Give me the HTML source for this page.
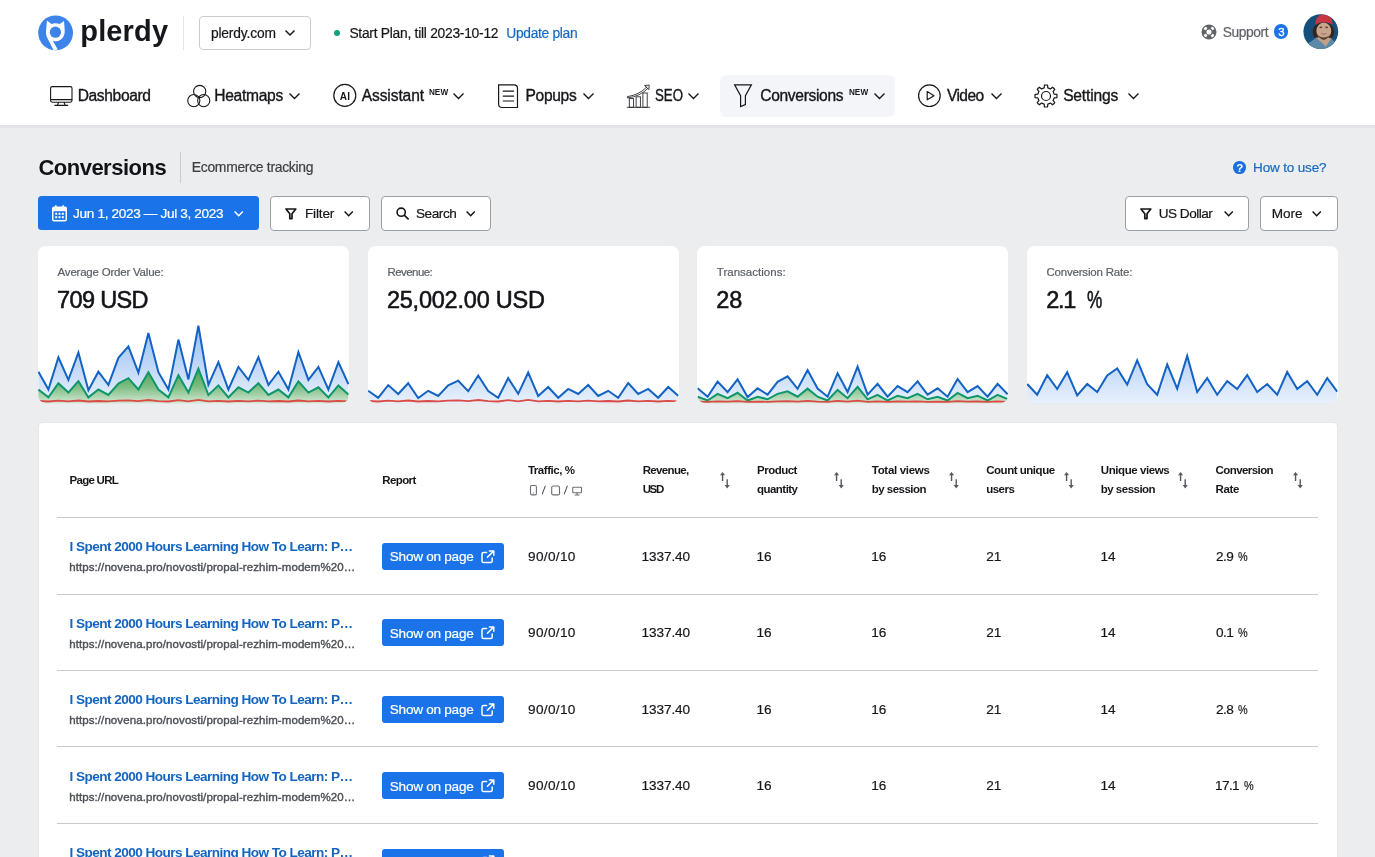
<!DOCTYPE html>
<html lang="en">
<head>
<meta charset="utf-8">
<title>Plerdy — Conversions</title>
<style>
*{box-sizing:border-box;margin:0;padding:0}
html,body{width:1375px;height:857px;overflow:hidden;background:#ebedef;font-family:"Liberation Sans",Arial,sans-serif;color:#111;}
#w{position:absolute;left:0;top:0;width:1375px;height:857px;overflow:hidden;will-change:transform}
.a{position:absolute;white-space:nowrap;line-height:1}
svg{position:absolute;overflow:visible}
#hdr{position:absolute;left:0;top:0;width:1375px;height:128px;background:#fff;border-bottom:3px solid #e2e4e7}
.btn{position:absolute;top:196px;height:34.6px;border:1px solid #9aa0a6;border-radius:4px;background:#fff}
.card{position:absolute;top:246px;width:311px;height:157.2px;background:#fff;border-radius:8px;overflow:hidden}
#tbl{position:absolute;left:38.8px;top:423px;width:1298px;height:460px;background:#fff;border-radius:4px;box-shadow:0 0 0 1px #e6e8ea}
.hl{position:absolute;left:57.3px;width:1261px;height:1.1px;background:#c8cacd}
.sb{position:absolute;left:381.9px;width:122.5px;height:27px;background:#1a73e8;border-radius:3px}
</style>
</head>
<body>
<div id="w">
<div id="hdr"></div>


<svg style="left:0;top:0" width="180" height="64" viewBox="0 0 180 64">
  <circle cx="55.6" cy="32.9" r="17.4" fill="#3d84ea"/>
  <path d="M46.9 20.6 L51.4 24 Q55.4 22.5 59.6 24 L64 20.9 L64.7 30 Q65.2 36.5 60.6 39.8 Q56.5 42.3 52.8 40.8 L57.8 49.6 L53.6 50.2 L46.6 36.5 Q45.4 33 46.2 29.5 Z" fill="#fff"/>
  <circle cx="55.4" cy="32.2" r="5.6" fill="#3d84ea"/>
</svg>
<div class="a" style="left:80.30px;top:17px;font-size:29px;font-weight:700;letter-spacing:0.140px;color:#15171c;">plerdy</div><div class="a" style="left:183px;top:16px;width:1.3px;height:34px;background:#e3e5e8"></div>
<div class="a" style="left:199px;top:16px;width:112px;height:34px;border:1px solid #c9ccd0;border-radius:4px;background:#fff"></div>
<div class="a" style="left:210.90px;top:27px;font-size:13.8px;letter-spacing:-0.162px;color:#15171a;-webkit-text-stroke:0.2px #15171a;">plerdy.com</div><svg style="left:285px;top:30.2px" width="10" height="6" viewBox="0 0 10 6"><path d="M0.5 0.5 L5 5 L9.5 0.5" fill="none" stroke="#15171a" stroke-width="1.5"/></svg>
<div class="a" style="left:334.3px;top:30.1px;width:6px;height:6px;border-radius:50%;background:#12a37a"></div>
<div class="a" style="left:349.40px;top:27px;font-size:13.8px;letter-spacing:-0.254px;color:#15171a;-webkit-text-stroke:0.2px #15171a;">Start Plan, till 2023-10-12</div><div class="a" style="left:506.30px;top:27px;font-size:13.8px;letter-spacing:-0.313px;color:#1769c2;-webkit-text-stroke:0.2px #1769c2;">Update plan</div>
<svg style="left:1200.7px;top:23.7px" width="16" height="16" viewBox="0 0 16 16">
  <circle cx="8" cy="8" r="6.9" fill="none" stroke="#5f6368" stroke-width="1.2"/>
  <circle cx="8" cy="8" r="3.1" fill="none" stroke="#5f6368" stroke-width="1.1"/>
  <path fill="#5f6368" d="M6.55 5.15 L4.82 1.76 A7.0 7.0 0 0 1 11.18 1.76 L9.45 5.15 A3.2 3.2 0 0 0 6.55 5.15 Z M10.85 6.55 L14.24 4.82 A7.0 7.0 0 0 1 14.24 11.18 L10.85 9.45 A3.2 3.2 0 0 0 10.85 6.55 Z M9.45 10.85 L11.18 14.24 A7.0 7.0 0 0 1 4.82 14.24 L6.55 10.85 A3.2 3.2 0 0 0 9.45 10.85 Z M5.15 9.45 L1.76 11.18 A7.0 7.0 0 0 1 1.76 4.82 L5.15 6.55 A3.2 3.2 0 0 0 5.15 9.45 Z"/>
</svg>
<div class="a" style="left:1222.80px;top:26px;font-size:13.8px;letter-spacing:-0.415px;color:#5f6368;-webkit-text-stroke:0.2px #5f6368;">Support</div><div class="a" style="left:1273.8px;top:24.2px;width:14.6px;height:14.6px;border-radius:50%;background:#1a73e8"></div>
<div class="a" style="left:1278.25px;top:27px;font-size:11.5px;color:#fff;-webkit-text-stroke:0.3px #fff;">3</div>
<svg style="left:1303px;top:14px" width="36" height="36" viewBox="0 0 36 36">
  <defs><clipPath id="avc"><circle cx="17.8" cy="17.6" r="17.4"/></clipPath><filter id="avb" x="-10%" y="-10%" width="120%" height="120%"><feGaussianBlur stdDeviation="0.55"/></filter></defs>
  <g clip-path="url(#avc)">
    <rect x="0" y="0" width="36" height="36" fill="#164f7c"/>
    <g filter="url(#avb)">
    <ellipse cx="20.4" cy="18" rx="10.8" ry="9.8" fill="#33251f"/>
    <path d="M2 37 L5 29.5 L13 23.8 L28 24 L33.5 30 L35 37 Z" fill="#5d89a8"/>
    <path d="M13 23.4 L23 32.5 L28.2 24 Z" fill="#c39f87"/>
    <ellipse cx="20.8" cy="17" rx="7.4" ry="8.6" fill="#caa58d"/>
    <path d="M13.6 18 Q15 24.8 20.8 26 Q26.2 24.8 28 18 Q27 23 20.8 23.6 Q14.6 23 13.6 18Z" fill="#5a4032"/>
    <ellipse cx="17.9" cy="13.4" rx="1.5" ry="0.8" fill="#5b4236"/><ellipse cx="23.6" cy="13.4" rx="1.5" ry="0.8" fill="#5b4236"/>
    <path d="M18.4 19.6 Q20.8 21.6 23.4 19.6 Q20.8 20.6 18.4 19.6Z" fill="#f2e6df" stroke="#8a5a4a" stroke-width="0.5"/>
    <path d="M12.4 10.6 Q12.3 1.5 20 0.4 Q28.8 0 29.8 10.4 Q21 5.8 12.4 10.6 Z" fill="#c9343f"/>
    </g>
  </g>
</svg>


<svg style="left:49px;top:84px" width="26" height="24" viewBox="49 84 26 24" fill="none" stroke="#15171a" stroke-width="1.1">
  <rect x="50.6" y="86.6" width="21.4" height="15.6" rx="1.6"/>
  <path d="M50.6 99.6 H72 M58.6 102.2 L57.4 105.3 M64 102.2 L65.2 105.3 M54.4 105.4 H68.2"/>
</svg>
<div class="a" style="left:77.67px;top:88px;font-size:15.6px;letter-spacing:-0.370px;color:#15171a;-webkit-text-stroke:0.35px #15171a;">Dashboard</div>
<svg style="left:186px;top:84px" width="26" height="24" viewBox="186 84 26 24" fill="none" stroke="#15171a" stroke-width="1.1">
  <circle cx="199.7" cy="91.5" r="6.1"/><circle cx="193.8" cy="100.6" r="6.1"/><circle cx="203.7" cy="100.6" r="6.1"/>
</svg>
<div class="a" style="left:214.18px;top:88px;font-size:15.6px;letter-spacing:-0.289px;color:#15171a;-webkit-text-stroke:0.35px #15171a;">Heatmaps</div><svg style="left:289px;top:92.7px" width="11" height="7" viewBox="0 0 11 7"><path d="M0.5 0.6 L5.5 5.6 L10.5 0.6" fill="none" stroke="#15171a" stroke-width="1.4"/></svg>

<svg style="left:332px;top:83px" width="26" height="26" viewBox="332 83 26 26" fill="none" stroke="#15171a" stroke-width="1.2">
  <circle cx="344.8" cy="95.4" r="11"/>
</svg>
<div class="a" style="left:339.80px;top:92px;font-size:10px;font-weight:700;letter-spacing:0.278px;color:#15171a;">AI</div><div class="a" style="left:361.68px;top:88px;font-size:15.6px;letter-spacing:-0.110px;color:#15171a;-webkit-text-stroke:0.35px #15171a;">Assistant</div><div class="a" style="left:428.90px;top:89px;font-size:8.2px;font-weight:700;letter-spacing:0.063px;color:#15171a;">NEW</div><svg style="left:453.3px;top:92.7px" width="11" height="7" viewBox="0 0 11 7"><path d="M0.5 0.6 L5.5 5.6 L10.5 0.6" fill="none" stroke="#15171a" stroke-width="1.4"/></svg>

<svg style="left:497px;top:83px" width="24" height="27" viewBox="497 83 24 27" fill="none" stroke="#15171a" stroke-width="1.2">
  <path d="M498.6 84.9 H514 Q517.5 84.9 517.5 88.4 V107.5 H502.1 Q498.6 107.5 498.6 104 Z"/>
  <path d="M502.8 91.2 H514 M502.8 96.1 H514 M502.8 101 H514"/>
</svg>
<div class="a" style="left:525.57px;top:88px;font-size:15.6px;letter-spacing:-0.348px;color:#15171a;-webkit-text-stroke:0.35px #15171a;">Popups</div><svg style="left:582.6px;top:92.7px" width="11" height="7" viewBox="0 0 11 7"><path d="M0.5 0.6 L5.5 5.6 L10.5 0.6" fill="none" stroke="#15171a" stroke-width="1.4"/></svg>

<svg style="left:626px;top:83px" width="26" height="26" viewBox="626 83 26 26" fill="none" stroke="#2a2d31" stroke-width="0.9">
  <path d="M626.8 107.3 H650.2"/>
  <rect x="629.3" y="98.6" width="4.3" height="8.7"/><rect x="636.1" y="96.8" width="4.3" height="10.5"/><rect x="642.9" y="93" width="4.3" height="14.3"/>
  <path d="M627.6 96.6 Q639 95 647.2 86.6 M627.6 97.9 Q640 96.6 648.2 88 M627.6 96.4 V98.1"/>
  <path d="M644.6 85.6 L649.2 85 L648.9 89.6 Z"/>
</svg>
<div class="a" style="left:654.97px;top:88px;font-size:15.6px;color:#15171a;-webkit-text-stroke:0.35px #15171a;transform-origin:0 0;transform:scaleX(0.85);">SEO</div><svg style="left:687.8px;top:92.7px" width="11" height="7" viewBox="0 0 11 7"><path d="M0.5 0.6 L5.5 5.6 L10.5 0.6" fill="none" stroke="#15171a" stroke-width="1.4"/></svg>
<div class="a" style="left:720.2px;top:75px;width:175.2px;height:42px;border-radius:6px;background:#f3f5f9"></div>

<svg style="left:733px;top:83px" width="20" height="26" viewBox="733 83 20 26" fill="none" stroke="#15171a" stroke-width="1.2">
  <path d="M734.6 84.8 H751.4 L745.4 95.6 V104.6 L740.6 106.6 V95.6 Z" stroke-linejoin="miter"/>
</svg>
<div class="a" style="left:760.27px;top:88px;font-size:15.6px;letter-spacing:-0.342px;color:#15171a;-webkit-text-stroke:0.35px #15171a;">Conversions</div><div class="a" style="left:848.90px;top:89px;font-size:8.2px;font-weight:700;letter-spacing:0.063px;color:#15171a;">NEW</div><svg style="left:873.7px;top:92.7px" width="11" height="7" viewBox="0 0 11 7"><path d="M0.5 0.6 L5.5 5.6 L10.5 0.6" fill="none" stroke="#15171a" stroke-width="1.4"/></svg>

<svg style="left:917px;top:83px" width="26" height="26" viewBox="917 83 26 26" fill="none" stroke="#15171a" stroke-width="1.2">
  <circle cx="929.4" cy="95.7" r="10.8"/>
  <path d="M927.2 91.6 L934 95.7 L927.2 99.8 Z" stroke-linejoin="round"/>
</svg>
<div class="a" style="left:946.88px;top:88px;font-size:15.6px;letter-spacing:-0.570px;color:#15171a;-webkit-text-stroke:0.35px #15171a;">Video</div><svg style="left:990.6px;top:92.7px" width="11" height="7" viewBox="0 0 11 7"><path d="M0.5 0.6 L5.5 5.6 L10.5 0.6" fill="none" stroke="#15171a" stroke-width="1.4"/></svg>

<svg style="left:1034.4px;top:83.5px" width="24" height="24" viewBox="0 0 24 24" fill="none" stroke="#15171a" stroke-width="1.2" stroke-linejoin="round">
  <path d="M10.19 3.90 L10.45 1.11 A11.00 11.00 0 0 1 13.55 1.11 L13.81 3.90 A8.30 8.30 0 0 1 16.45 4.99 L18.60 3.20 A11.00 11.00 0 0 1 20.80 5.40 L19.01 7.55 A8.30 8.30 0 0 1 20.10 10.19 L22.89 10.45 A11.00 11.00 0 0 1 22.89 13.55 L20.10 13.81 A8.30 8.30 0 0 1 19.01 16.45 L20.80 18.60 A11.00 11.00 0 0 1 18.60 20.80 L16.45 19.01 A8.30 8.30 0 0 1 13.81 20.10 L13.55 22.89 A11.00 11.00 0 0 1 10.45 22.89 L10.19 20.10 A8.30 8.30 0 0 1 7.55 19.01 L5.40 20.80 A11.00 11.00 0 0 1 3.20 18.60 L4.99 16.45 A8.30 8.30 0 0 1 3.90 13.81 L1.11 13.55 A11.00 11.00 0 0 1 1.11 10.45 L3.90 10.19 A8.30 8.30 0 0 1 4.99 7.55 L3.20 5.40 A11.00 11.00 0 0 1 5.40 3.20 L7.55 4.99 A8.30 8.30 0 0 1 10.19 3.90 Z"/>
  <circle cx="12" cy="12" r="4.5"/>
</svg>
<div class="a" style="left:1063.17px;top:88px;font-size:15.6px;letter-spacing:-0.185px;color:#15171a;-webkit-text-stroke:0.35px #15171a;">Settings</div><svg style="left:1128.2px;top:92.7px" width="11" height="7" viewBox="0 0 11 7"><path d="M0.5 0.6 L5.5 5.6 L10.5 0.6" fill="none" stroke="#15171a" stroke-width="1.4"/></svg>

<div class="a" style="left:38.40px;top:157px;font-size:22px;font-weight:700;letter-spacing:-0.502px;color:#111317;">Conversions</div><div class="a" style="left:180px;top:151.5px;width:1px;height:31px;background:#c9ccd0"></div>
<div class="a" style="left:191.80px;top:161px;font-size:13.9px;letter-spacing:-0.292px;color:#3c4043;-webkit-text-stroke:0.2px #3c4043;">Ecommerce tracking</div><div class="a" style="left:1233.1px;top:161.1px;width:12.6px;height:12.6px;border-radius:50%;background:#1a6fdf"></div>
<div class="a" style="left:1236.30px;top:163px;font-size:11.5px;font-weight:700;color:#fff;">?</div><div class="a" style="left:1253.10px;top:161px;font-size:13.5px;letter-spacing:-0.163px;color:#1769c2;-webkit-text-stroke:0.2px #1769c2;">How to use?</div><div class="a" style="left:38.3px;top:196px;width:220.8px;height:34.3px;border-radius:3.5px;background:#1a73e8"></div>

<svg style="left:51.9px;top:205.1px" width="15" height="17" viewBox="0 0 15 17">
  <path d="M1.8 1.5 H3 V0.2 H4.6 V1.5 H10.4 V0.2 H12 V1.5 H13.2 Q15 1.5 15 3.3 V14.6 Q15 16.4 13.2 16.4 H1.8 Q0 16.4 0 14.6 V3.3 Q0 1.5 1.8 1.5 Z" fill="#fff"/>
  <rect x="1.5" y="6.2" width="12" height="8.7" fill="#1a73e8"/>
  <g fill="#fff"><rect x="3.2" y="7.8" width="2" height="2"/><rect x="6.5" y="7.8" width="2" height="2"/><rect x="9.8" y="7.8" width="2" height="2"/><rect x="3.2" y="11.2" width="2" height="2"/><rect x="6.5" y="11.2" width="2" height="2"/><rect x="9.8" y="11.2" width="2" height="2"/></g>
</svg>
<div class="a" style="left:73.10px;top:207px;font-size:13.6px;letter-spacing:-0.344px;color:#fff;-webkit-text-stroke:0.2px #fff;">Jun 1, 2023 — Jul 3, 2023</div><svg style="left:233.7px;top:210.7px" width="10" height="6" viewBox="0 0 10 6"><path d="M0.6 0.6 L4.7 4.8 L8.8 0.6" fill="none" stroke="#fff" stroke-width="1.5"/></svg>
<div class="btn" style="left:270.4px;width:99.3px"></div>
<svg style="left:285.4px;top:207.6px" width="12" height="12" viewBox="0 0 12 12" fill="none" stroke="#15171a" stroke-width="1.7" stroke-linejoin="round"><path d="M1 1 H10.8 L7 5.8 V10.6 H4.8 V5.8 Z"/></svg>
<div class="a" style="left:304.90px;top:207px;font-size:13.6px;letter-spacing:-0.156px;color:#15171a;-webkit-text-stroke:0.2px #15171a;">Filter</div><svg style="left:344.2px;top:210.7px" width="10" height="6" viewBox="0 0 10 6"><path d="M0.6 0.6 L4.7 4.8 L8.8 0.6" fill="none" stroke="#15171a" stroke-width="1.5"/></svg>
<div class="btn" style="left:381.2px;width:109.6px"></div>
<svg style="left:395.6px;top:207.2px" width="14" height="13" viewBox="0 0 14 13" fill="none" stroke="#15171a" stroke-width="1.6"><circle cx="5.2" cy="5.2" r="4.1"/><path d="M8.2 8.2 L12.6 12.4"/></svg>
<div class="a" style="left:416.00px;top:207px;font-size:13.6px;letter-spacing:-0.442px;color:#15171a;-webkit-text-stroke:0.2px #15171a;">Search</div><svg style="left:465.6px;top:210.7px" width="10" height="6" viewBox="0 0 10 6"><path d="M0.6 0.6 L4.7 4.8 L8.8 0.6" fill="none" stroke="#15171a" stroke-width="1.5"/></svg>
<div class="btn" style="left:1125.2px;width:123.6px"></div>
<svg style="left:1140.2px;top:207.6px" width="12" height="12" viewBox="0 0 12 12" fill="none" stroke="#15171a" stroke-width="1.7" stroke-linejoin="round"><path d="M1 1 H10.8 L7 5.8 V10.6 H4.8 V5.8 Z"/></svg>
<div class="a" style="left:1158.80px;top:207px;font-size:13.6px;letter-spacing:-0.530px;color:#15171a;-webkit-text-stroke:0.2px #15171a;">US Dollar</div><svg style="left:1223.5px;top:210.7px" width="10" height="6" viewBox="0 0 10 6"><path d="M0.6 0.6 L4.7 4.8 L8.8 0.6" fill="none" stroke="#15171a" stroke-width="1.5"/></svg>
<div class="btn" style="left:1260.4px;width:77.4px"></div>
<div class="a" style="left:1271.80px;top:207px;font-size:13.6px;letter-spacing:-0.104px;color:#15171a;-webkit-text-stroke:0.2px #15171a;">More</div><svg style="left:1312.2px;top:210.7px" width="10" height="6" viewBox="0 0 10 6"><path d="M0.6 0.6 L4.7 4.8 L8.8 0.6" fill="none" stroke="#15171a" stroke-width="1.5"/></svg>

<svg style="left:0;top:0" width="0" height="0"><defs>
<linearGradient id="gb" gradientUnits="userSpaceOnUse" x1="0" y1="338" x2="0" y2="403"><stop offset="0" stop-color="#1a6fe0" stop-opacity="0.40"/><stop offset="1" stop-color="#1a6fe0" stop-opacity="0.10"/></linearGradient>
<linearGradient id="gg" gradientUnits="userSpaceOnUse" x1="0" y1="366" x2="0" y2="403"><stop offset="0" stop-color="#3a9a3a" stop-opacity="0.98"/><stop offset="0.55" stop-color="#6db56d" stop-opacity="0.85"/><stop offset="1" stop-color="#cfe6cf" stop-opacity="0.9"/></linearGradient>
</defs></svg>
<div class="card" style="left:38px"></div>
<div class="a" style="left:57.60px;top:267px;font-size:11.5px;letter-spacing:-0.214px;color:#5a5f64;-webkit-text-stroke:0.2px #5a5f64;">Average Order Value:</div><div class="a" style="left:57.07px;top:289px;font-size:23.5px;letter-spacing:-0.639px;color:#111317;-webkit-text-stroke:0.55px #111317;">709 USD</div><svg style="left:0;top:0" width="1375" height="420" viewBox="0 0 1375 420"><defs><clipPath id="cc1"><rect x="38" y="246" width="311" height="157.2" rx="8"/></clipPath></defs><g clip-path="url(#cc1)"><path d="M38.4 405.2 L38.4 371.7 L48.4 389.5 L58.4 357.3 L68.4 379.9 L78.4 352.5 L88.4 390.2 L98.4 371.7 L108.4 384.9 L118.4 357.8 L128.4 346.3 L138.4 372.7 L148.4 333.1 L158.4 372.2 L168.4 389.5 L178.4 339.6 L188.4 379.4 L198.4 325.6 L208.4 384.9 L218.4 362.1 L228.4 389.5 L238.4 366.9 L248.4 379.9 L258.4 357.1 L268.4 384.9 L278.4 371.7 L288.4 389.5 L298.4 352.0 L308.4 379.9 L318.4 366.9 L328.4 389.5 L338.4 362.1 L348.4 384.2 L348.4 405.2 Z" fill="url(#gb)"/><path d="M38.4 405.2 L38.4 389.5 L48.4 397.4 L58.4 383.2 L68.4 392.6 L78.4 381.1 L88.4 397.4 L98.4 389.5 L108.4 395.0 L118.4 383.5 L128.4 378.2 L138.4 389.5 L148.4 372.2 L158.4 389.5 L168.4 397.4 L178.4 375.1 L188.4 392.6 L198.4 368.6 L208.4 395.0 L218.4 385.4 L228.4 397.4 L238.4 387.3 L248.4 392.6 L258.4 383.2 L268.4 395.0 L278.4 389.5 L288.4 397.4 L298.4 381.3 L308.4 392.6 L318.4 387.3 L328.4 397.4 L338.4 385.4 L348.4 394.5 L348.4 405.2 Z" fill="url(#gg)"/><path d="M38.4 371.7 L48.4 389.5 L58.4 357.3 L68.4 379.9 L78.4 352.5 L88.4 390.2 L98.4 371.7 L108.4 384.9 L118.4 357.8 L128.4 346.3 L138.4 372.7 L148.4 333.1 L158.4 372.2 L168.4 389.5 L178.4 339.6 L188.4 379.4 L198.4 325.6 L208.4 384.9 L218.4 362.1 L228.4 389.5 L238.4 366.9 L248.4 379.9 L258.4 357.1 L268.4 384.9 L278.4 371.7 L288.4 389.5 L298.4 352.0 L308.4 379.9 L318.4 366.9 L328.4 389.5 L338.4 362.1 L348.4 384.2" fill="none" stroke="#1463c4" stroke-width="2.0" stroke-linejoin="miter"/><path d="M38.4 389.5 L48.4 397.4 L58.4 383.2 L68.4 392.6 L78.4 381.1 L88.4 397.4 L98.4 389.5 L108.4 395.0 L118.4 383.5 L128.4 378.2 L138.4 389.5 L148.4 372.2 L158.4 389.5 L168.4 397.4 L178.4 375.1 L188.4 392.6 L198.4 368.6 L208.4 395.0 L218.4 385.4 L228.4 397.4 L238.4 387.3 L248.4 392.6 L258.4 383.2 L268.4 395.0 L278.4 389.5 L288.4 397.4 L298.4 381.3 L308.4 392.6 L318.4 387.3 L328.4 397.4 L338.4 385.4 L348.4 394.5" fill="none" stroke="#0f976b" stroke-width="2.0" stroke-linejoin="miter"/><path d="M38.4 401.0 L48.4 401.5 L58.4 400.7 L68.4 401.3 L78.4 400.5 L88.4 401.5 L98.4 401.0 L108.4 401.4 L118.4 400.7 L128.4 400.4 L138.4 401.1 L148.4 400.0 L158.4 401.1 L168.4 401.5 L178.4 400.2 L188.4 401.3 L198.4 399.8 L208.4 401.4 L218.4 400.8 L228.4 401.5 L238.4 400.9 L248.4 401.3 L258.4 400.7 L268.4 401.4 L278.4 401.0 L288.4 401.5 L298.4 400.5 L308.4 401.3 L318.4 400.9 L328.4 401.5 L338.4 400.8 L348.4 401.4" fill="none" stroke="#dc4a44" stroke-width="1.8" stroke-linejoin="miter"/></g></svg>
<div class="card" style="left:367.8px"></div>
<div class="a" style="left:387.40px;top:267px;font-size:11.5px;letter-spacing:-0.548px;color:#5a5f64;-webkit-text-stroke:0.2px #5a5f64;">Revenue:</div><div class="a" style="left:386.88px;top:289px;font-size:23.5px;letter-spacing:-0.214px;color:#111317;-webkit-text-stroke:0.55px #111317;">25,002.00 USD</div><svg style="left:0;top:0" width="1375" height="420" viewBox="0 0 1375 420"><defs><clipPath id="cc2"><rect x="367.8" y="246" width="311" height="157.2" rx="8"/></clipPath></defs><g clip-path="url(#cc2)"><path d="M368.2 405.2 L368.2 390.8 L378.2 397.8 L388.2 385.1 L398.2 394.0 L408.2 383.2 L418.2 398.1 L428.2 390.8 L438.2 396.0 L448.2 385.3 L458.2 380.7 L468.2 391.2 L478.2 375.5 L488.2 391.0 L498.2 397.8 L508.2 378.1 L518.2 393.8 L528.2 372.5 L538.2 396.0 L548.2 387.0 L558.2 397.8 L568.2 388.9 L578.2 394.0 L588.2 385.0 L598.2 396.0 L608.2 390.8 L618.2 397.8 L628.2 383.0 L638.2 394.0 L648.2 388.9 L658.2 397.8 L668.2 387.0 L678.2 395.7 L678.2 405.2 Z" fill="url(#gb)"/><path d="M368.2 390.8 L378.2 397.8 L388.2 385.1 L398.2 394.0 L408.2 383.2 L418.2 398.1 L428.2 390.8 L438.2 396.0 L448.2 385.3 L458.2 380.7 L468.2 391.2 L478.2 375.5 L488.2 391.0 L498.2 397.8 L508.2 378.1 L518.2 393.8 L528.2 372.5 L538.2 396.0 L548.2 387.0 L558.2 397.8 L568.2 388.9 L578.2 394.0 L588.2 385.0 L598.2 396.0 L608.2 390.8 L618.2 397.8 L628.2 383.0 L638.2 394.0 L648.2 388.9 L658.2 397.8 L668.2 387.0 L678.2 395.7" fill="none" stroke="#1463c4" stroke-width="2.0" stroke-linejoin="miter"/><path d="M368.2 401.0 L378.2 401.5 L388.2 400.7 L398.2 401.3 L408.2 400.5 L418.2 401.5 L428.2 401.0 L438.2 401.4 L448.2 400.7 L458.2 400.4 L468.2 401.1 L478.2 400.0 L488.2 401.1 L498.2 401.5 L508.2 400.2 L518.2 401.3 L528.2 399.8 L538.2 401.4 L548.2 400.8 L558.2 401.5 L568.2 400.9 L578.2 401.3 L588.2 400.7 L598.2 401.4 L608.2 401.0 L618.2 401.5 L628.2 400.5 L638.2 401.3 L648.2 400.9 L658.2 401.5 L668.2 400.8 L678.2 401.4" fill="none" stroke="#dc4a44" stroke-width="1.8" stroke-linejoin="miter"/></g></svg>
<div class="card" style="left:697.2px"></div>
<div class="a" style="left:716.80px;top:267px;font-size:11.5px;letter-spacing:0.016px;color:#5a5f64;-webkit-text-stroke:0.2px #5a5f64;">Transactions:</div><div class="a" style="left:716.27px;top:289px;font-size:23.5px;color:#111317;-webkit-text-stroke:0.55px #111317;">28</div><svg style="left:0;top:0" width="1375" height="420" viewBox="0 0 1375 420"><defs><clipPath id="cc3"><rect x="697.2" y="246" width="311" height="157.2" rx="8"/></clipPath></defs><g clip-path="url(#cc3)"><path d="M697.6 405.2 L697.6 388.3 L707.6 396.7 L717.6 381.5 L727.6 392.2 L737.6 379.3 L747.6 397.1 L757.6 388.3 L767.6 394.6 L777.6 381.8 L787.6 376.3 L797.6 388.8 L807.6 370.1 L817.6 388.6 L827.6 396.7 L837.6 373.2 L847.6 392.0 L857.6 366.6 L867.6 394.6 L877.6 383.8 L887.6 396.7 L897.6 386.1 L907.6 392.2 L917.6 381.4 L927.6 394.6 L937.6 388.3 L947.6 396.7 L957.6 379.0 L967.6 392.2 L977.6 386.1 L987.6 396.7 L997.6 383.8 L1007.6 394.2 L1007.6 405.2 Z" fill="url(#gb)"/><path d="M697.6 405.2 L697.6 396.7 L707.6 400.5 L717.6 393.8 L727.6 398.2 L737.6 392.8 L747.6 400.5 L757.6 396.7 L767.6 399.3 L777.6 393.9 L787.6 391.4 L797.6 396.7 L807.6 388.6 L817.6 396.7 L827.6 400.5 L837.6 389.9 L847.6 398.2 L857.6 386.9 L867.6 399.3 L877.6 394.8 L887.6 400.5 L897.6 395.7 L907.6 398.2 L917.6 393.8 L927.6 399.3 L937.6 396.7 L947.6 400.5 L957.6 392.9 L967.6 398.2 L977.6 395.7 L987.6 400.5 L997.6 394.8 L1007.6 399.1 L1007.6 405.2 Z" fill="url(#gg)"/><path d="M697.6 388.3 L707.6 396.7 L717.6 381.5 L727.6 392.2 L737.6 379.3 L747.6 397.1 L757.6 388.3 L767.6 394.6 L777.6 381.8 L787.6 376.3 L797.6 388.8 L807.6 370.1 L817.6 388.6 L827.6 396.7 L837.6 373.2 L847.6 392.0 L857.6 366.6 L867.6 394.6 L877.6 383.8 L887.6 396.7 L897.6 386.1 L907.6 392.2 L917.6 381.4 L927.6 394.6 L937.6 388.3 L947.6 396.7 L957.6 379.0 L967.6 392.2 L977.6 386.1 L987.6 396.7 L997.6 383.8 L1007.6 394.2" fill="none" stroke="#1463c4" stroke-width="2.0" stroke-linejoin="miter"/><path d="M697.6 396.7 L707.6 400.5 L717.6 393.8 L727.6 398.2 L737.6 392.8 L747.6 400.5 L757.6 396.7 L767.6 399.3 L777.6 393.9 L787.6 391.4 L797.6 396.7 L807.6 388.6 L817.6 396.7 L827.6 400.5 L837.6 389.9 L847.6 398.2 L857.6 386.9 L867.6 399.3 L877.6 394.8 L887.6 400.5 L897.6 395.7 L907.6 398.2 L917.6 393.8 L927.6 399.3 L937.6 396.7 L947.6 400.5 L957.6 392.9 L967.6 398.2 L977.6 395.7 L987.6 400.5 L997.6 394.8 L1007.6 399.1" fill="none" stroke="#0f976b" stroke-width="2.0" stroke-linejoin="miter"/><path d="M697.6 401.6 L707.6 401.9 L717.6 401.3 L727.6 401.7 L737.6 401.2 L747.6 401.9 L757.6 401.6 L767.6 401.8 L777.6 401.3 L787.6 401.1 L797.6 401.6 L807.6 400.8 L817.6 401.6 L827.6 401.9 L837.6 400.9 L847.6 401.7 L857.6 400.6 L867.6 401.8 L877.6 401.4 L887.6 401.9 L897.6 401.5 L907.6 401.7 L917.6 401.3 L927.6 401.8 L937.6 401.6 L947.6 401.9 L957.6 401.2 L967.6 401.7 L977.6 401.5 L987.6 401.9 L997.6 401.4 L1007.6 401.8" fill="none" stroke="#dc4a44" stroke-width="1.8" stroke-linejoin="miter"/></g></svg>
<div class="card" style="left:1026.8px"></div>
<div class="a" style="left:1046.40px;top:267px;font-size:11.5px;letter-spacing:-0.190px;color:#5a5f64;-webkit-text-stroke:0.2px #5a5f64;">Conversion Rate:</div><div class="a" style="left:1046.28px;top:289px;font-size:23.5px;letter-spacing:-1.324px;color:#111317;-webkit-text-stroke:0.55px #111317;">2.1</div><div class="a" style="left:1086.98px;top:289px;font-size:23.5px;color:#111317;-webkit-text-stroke:0.55px #111317;transform-origin:0 0;transform:scaleX(0.73);">%</div><svg style="left:0;top:0" width="1375" height="420" viewBox="0 0 1375 420"><defs><clipPath id="cc4"><rect x="1026.8" y="246" width="311" height="157.2" rx="8"/></clipPath></defs><g clip-path="url(#cc4)"><path d="M1027.2 405.2 L1027.2 384.0 L1037.2 394.8 L1047.2 375.2 L1057.2 389.0 L1067.2 372.3 L1077.2 395.3 L1087.2 384.0 L1097.2 392.0 L1107.2 375.5 L1117.2 368.5 L1127.2 384.6 L1137.2 360.4 L1147.2 384.3 L1157.2 394.8 L1167.2 364.4 L1177.2 388.7 L1187.2 355.9 L1197.2 392.0 L1207.2 378.1 L1217.2 394.8 L1227.2 381.1 L1237.2 389.0 L1247.2 375.1 L1257.2 392.0 L1267.2 384.0 L1277.2 394.8 L1287.2 372.0 L1297.2 389.0 L1307.2 381.1 L1317.2 394.8 L1327.2 378.1 L1337.2 391.6 L1337.2 405.2 Z" fill="url(#gb)"/><path d="M1027.2 384.0 L1037.2 394.8 L1047.2 375.2 L1057.2 389.0 L1067.2 372.3 L1077.2 395.3 L1087.2 384.0 L1097.2 392.0 L1107.2 375.5 L1117.2 368.5 L1127.2 384.6 L1137.2 360.4 L1147.2 384.3 L1157.2 394.8 L1167.2 364.4 L1177.2 388.7 L1187.2 355.9 L1197.2 392.0 L1207.2 378.1 L1217.2 394.8 L1227.2 381.1 L1237.2 389.0 L1247.2 375.1 L1257.2 392.0 L1267.2 384.0 L1277.2 394.8 L1287.2 372.0 L1297.2 389.0 L1307.2 381.1 L1317.2 394.8 L1327.2 378.1 L1337.2 391.6" fill="none" stroke="#1463c4" stroke-width="2.0" stroke-linejoin="miter"/></g></svg>

<div id="tbl"></div>
<div class="a" style="left:69.50px;top:475px;font-size:11.5px;font-weight:700;letter-spacing:-0.713px;color:#15171a;">Page URL</div><div class="a" style="left:382.30px;top:475px;font-size:11.5px;font-weight:700;letter-spacing:-0.625px;color:#15171a;">Report</div><div class="a" style="left:527.90px;top:465px;font-size:11.5px;font-weight:700;letter-spacing:-0.456px;color:#15171a;">Traffic, %</div><svg style="left:529px;top:483.5px" width="56" height="13" viewBox="529 483.5 56 13" fill="none" stroke="#6b6f75" stroke-width="1.1">
  <rect x="530.5" y="485" width="5.9" height="9.4" rx="1.3"/><path d="M532.9 492.6 H534" stroke-width="0.9"/>
  <path d="M545.4 485.2 L542.2 493.8 M567.4 485.2 L564.2 493.8" stroke="#3c4043" stroke-width="1"/>
  <rect x="551.7" y="485.5" width="7.8" height="8.9" rx="1.5"/>
  <rect x="572.7" y="486.7" width="8.8" height="5.6" rx="0.8"/><path d="M577.1 492.3 V494.4 M574.6 494.5 H579.6"/>
</svg>
<div class="a" style="left:642.70px;top:465px;font-size:11.5px;font-weight:700;letter-spacing:-0.648px;color:#15171a;">Revenue,</div><div class="a" style="left:642.70px;top:484px;font-size:11.5px;font-weight:700;letter-spacing:-1.388px;color:#15171a;">USD</div><svg style="left:719.8px;top:471.8px" width="11" height="17" viewBox="0 0 11 17" fill="#55595e" stroke="none"><path d="M2.55 0 L5.1 3.3 H3.25 V8.9 H1.85 V3.3 H0 Z"/><path d="M7.2 16.4 L4.65 13.1 H6.5 V7.2 H7.9 V13.1 H9.75 Z"/></svg>
<div class="a" style="left:757.00px;top:465px;font-size:11.5px;font-weight:700;letter-spacing:-0.503px;color:#15171a;">Product</div><div class="a" style="left:757.00px;top:484px;font-size:11.5px;font-weight:700;letter-spacing:-0.532px;color:#15171a;">quantity</div><svg style="left:834.3px;top:471.8px" width="11" height="17" viewBox="0 0 11 17" fill="#55595e" stroke="none"><path d="M2.55 0 L5.1 3.3 H3.25 V8.9 H1.85 V3.3 H0 Z"/><path d="M7.2 16.4 L4.65 13.1 H6.5 V7.2 H7.9 V13.1 H9.75 Z"/></svg>
<div class="a" style="left:871.80px;top:465px;font-size:11.5px;font-weight:700;letter-spacing:-0.314px;color:#15171a;">Total views</div><div class="a" style="left:871.80px;top:484px;font-size:11.5px;font-weight:700;letter-spacing:-0.535px;color:#15171a;">by session</div><svg style="left:948.9px;top:471.8px" width="11" height="17" viewBox="0 0 11 17" fill="#55595e" stroke="none"><path d="M2.55 0 L5.1 3.3 H3.25 V8.9 H1.85 V3.3 H0 Z"/><path d="M7.2 16.4 L4.65 13.1 H6.5 V7.2 H7.9 V13.1 H9.75 Z"/></svg>
<div class="a" style="left:986.20px;top:465px;font-size:11.5px;font-weight:700;letter-spacing:-0.472px;color:#15171a;">Count unique</div><div class="a" style="left:986.20px;top:484px;font-size:11.5px;font-weight:700;letter-spacing:-0.523px;color:#15171a;">users</div><svg style="left:1063.5px;top:471.8px" width="11" height="17" viewBox="0 0 11 17" fill="#55595e" stroke="none"><path d="M2.55 0 L5.1 3.3 H3.25 V8.9 H1.85 V3.3 H0 Z"/><path d="M7.2 16.4 L4.65 13.1 H6.5 V7.2 H7.9 V13.1 H9.75 Z"/></svg>
<div class="a" style="left:1100.80px;top:465px;font-size:11.5px;font-weight:700;letter-spacing:-0.427px;color:#15171a;">Unique views</div><div class="a" style="left:1100.80px;top:484px;font-size:11.5px;font-weight:700;letter-spacing:-0.513px;color:#15171a;">by session</div><svg style="left:1178.1px;top:471.8px" width="11" height="17" viewBox="0 0 11 17" fill="#55595e" stroke="none"><path d="M2.55 0 L5.1 3.3 H3.25 V8.9 H1.85 V3.3 H0 Z"/><path d="M7.2 16.4 L4.65 13.1 H6.5 V7.2 H7.9 V13.1 H9.75 Z"/></svg>
<div class="a" style="left:1215.60px;top:465px;font-size:11.5px;font-weight:700;letter-spacing:-0.582px;color:#15171a;">Conversion</div><div class="a" style="left:1215.60px;top:484px;font-size:11.5px;font-weight:700;letter-spacing:-0.377px;color:#15171a;">Rate</div><svg style="left:1292.8px;top:471.8px" width="11" height="17" viewBox="0 0 11 17" fill="#55595e" stroke="none"><path d="M2.55 0 L5.1 3.3 H3.25 V8.9 H1.85 V3.3 H0 Z"/><path d="M7.2 16.4 L4.65 13.1 H6.5 V7.2 H7.9 V13.1 H9.75 Z"/></svg>
<div class="hl" style="top:517.0px"></div>
<div class="a" style="left:69.50px;top:540px;font-size:13.6px;font-weight:700;letter-spacing:-0.546px;color:#1565c0;">I Spent 2000 Hours Learning How To Learn: P…</div><div class="a" style="left:69.20px;top:562px;font-size:11.5px;letter-spacing:0.086px;color:#4d5156;-webkit-text-stroke:0.4px #4d5156;">https://novena.pro/novosti/propal-rezhim-modem%20…</div><div class="sb" style="top:542.7px"></div>
<div class="a" style="left:389.80px;top:550px;font-size:13.6px;letter-spacing:-0.269px;color:#fff;-webkit-text-stroke:0.2px #fff;">Show on page</div><svg style="left:480.6px;top:549.6px" width="14" height="14" viewBox="0 0 14 14" fill="none" stroke="#fff" stroke-width="1.5" stroke-linecap="round" stroke-linejoin="round"><path d="M5.6 2.4 H2.6 Q1 2.4 1 4 V11 Q1 12.6 2.6 12.6 H9.6 Q11.2 12.6 11.2 11 V8"/><path d="M8.4 0.9 H12.8 V5.3 M12.6 1.1 L6.4 7.3"/></svg>
<div class="a" style="left:528.00px;top:550px;font-size:13.6px;letter-spacing:0.334px;color:#15171a;-webkit-text-stroke:0.2px #15171a;">90/0/10</div><div class="a" style="left:641.50px;top:550px;font-size:13.6px;letter-spacing:-0.080px;color:#15171a;-webkit-text-stroke:0.2px #15171a;">1337.40</div><div class="a" style="left:756.50px;top:550px;font-size:13.6px;color:#15171a;-webkit-text-stroke:0.2px #15171a;">16</div><div class="a" style="left:871.30px;top:550px;font-size:13.6px;color:#15171a;-webkit-text-stroke:0.2px #15171a;">16</div><div class="a" style="left:986.30px;top:550px;font-size:13.6px;color:#15171a;-webkit-text-stroke:0.2px #15171a;">21</div><div class="a" style="left:1100.50px;top:550px;font-size:13.6px;color:#15171a;-webkit-text-stroke:0.2px #15171a;">14</div><div class="a" style="left:1215.90px;top:550px;font-size:13.6px;letter-spacing:-0.468px;color:#15171a;-webkit-text-stroke:0.2px #15171a;">2.9</div><div class="a" style="left:1238.40px;top:550px;font-size:13.6px;color:#15171a;-webkit-text-stroke:0.2px #15171a;transform-origin:0 0;transform:scaleX(0.8);">%</div><div class="hl" style="top:593.5px"></div>
<div class="a" style="left:69.50px;top:617px;font-size:13.6px;font-weight:700;letter-spacing:-0.546px;color:#1565c0;">I Spent 2000 Hours Learning How To Learn: P…</div><div class="a" style="left:69.20px;top:639px;font-size:11.5px;letter-spacing:0.086px;color:#4d5156;-webkit-text-stroke:0.4px #4d5156;">https://novena.pro/novosti/propal-rezhim-modem%20…</div><div class="sb" style="top:619.2px"></div>
<div class="a" style="left:389.80px;top:627px;font-size:13.6px;letter-spacing:-0.269px;color:#fff;-webkit-text-stroke:0.2px #fff;">Show on page</div><svg style="left:480.6px;top:626.1px" width="14" height="14" viewBox="0 0 14 14" fill="none" stroke="#fff" stroke-width="1.5" stroke-linecap="round" stroke-linejoin="round"><path d="M5.6 2.4 H2.6 Q1 2.4 1 4 V11 Q1 12.6 2.6 12.6 H9.6 Q11.2 12.6 11.2 11 V8"/><path d="M8.4 0.9 H12.8 V5.3 M12.6 1.1 L6.4 7.3"/></svg>
<div class="a" style="left:528.00px;top:626px;font-size:13.6px;letter-spacing:0.334px;color:#15171a;-webkit-text-stroke:0.2px #15171a;">90/0/10</div><div class="a" style="left:641.50px;top:626px;font-size:13.6px;letter-spacing:-0.080px;color:#15171a;-webkit-text-stroke:0.2px #15171a;">1337.40</div><div class="a" style="left:756.50px;top:626px;font-size:13.6px;color:#15171a;-webkit-text-stroke:0.2px #15171a;">16</div><div class="a" style="left:871.30px;top:626px;font-size:13.6px;color:#15171a;-webkit-text-stroke:0.2px #15171a;">16</div><div class="a" style="left:986.30px;top:626px;font-size:13.6px;color:#15171a;-webkit-text-stroke:0.2px #15171a;">21</div><div class="a" style="left:1100.50px;top:626px;font-size:13.6px;color:#15171a;-webkit-text-stroke:0.2px #15171a;">14</div><div class="a" style="left:1215.90px;top:626px;font-size:13.6px;letter-spacing:-0.468px;color:#15171a;-webkit-text-stroke:0.2px #15171a;">0.1</div><div class="a" style="left:1238.40px;top:626px;font-size:13.6px;color:#15171a;-webkit-text-stroke:0.2px #15171a;transform-origin:0 0;transform:scaleX(0.8);">%</div><div class="hl" style="top:669.9px"></div>
<div class="a" style="left:69.50px;top:693px;font-size:13.6px;font-weight:700;letter-spacing:-0.546px;color:#1565c0;">I Spent 2000 Hours Learning How To Learn: P…</div><div class="a" style="left:69.20px;top:715px;font-size:11.5px;letter-spacing:0.086px;color:#4d5156;-webkit-text-stroke:0.4px #4d5156;">https://novena.pro/novosti/propal-rezhim-modem%20…</div><div class="sb" style="top:695.6px"></div>
<div class="a" style="left:389.80px;top:703px;font-size:13.6px;letter-spacing:-0.269px;color:#fff;-webkit-text-stroke:0.2px #fff;">Show on page</div><svg style="left:480.6px;top:702.5px" width="14" height="14" viewBox="0 0 14 14" fill="none" stroke="#fff" stroke-width="1.5" stroke-linecap="round" stroke-linejoin="round"><path d="M5.6 2.4 H2.6 Q1 2.4 1 4 V11 Q1 12.6 2.6 12.6 H9.6 Q11.2 12.6 11.2 11 V8"/><path d="M8.4 0.9 H12.8 V5.3 M12.6 1.1 L6.4 7.3"/></svg>
<div class="a" style="left:528.00px;top:703px;font-size:13.6px;letter-spacing:0.334px;color:#15171a;-webkit-text-stroke:0.2px #15171a;">90/0/10</div><div class="a" style="left:641.50px;top:703px;font-size:13.6px;letter-spacing:-0.080px;color:#15171a;-webkit-text-stroke:0.2px #15171a;">1337.40</div><div class="a" style="left:756.50px;top:703px;font-size:13.6px;color:#15171a;-webkit-text-stroke:0.2px #15171a;">16</div><div class="a" style="left:871.30px;top:703px;font-size:13.6px;color:#15171a;-webkit-text-stroke:0.2px #15171a;">16</div><div class="a" style="left:986.30px;top:703px;font-size:13.6px;color:#15171a;-webkit-text-stroke:0.2px #15171a;">21</div><div class="a" style="left:1100.50px;top:703px;font-size:13.6px;color:#15171a;-webkit-text-stroke:0.2px #15171a;">14</div><div class="a" style="left:1215.90px;top:703px;font-size:13.6px;letter-spacing:-0.468px;color:#15171a;-webkit-text-stroke:0.2px #15171a;">2.8</div><div class="a" style="left:1238.40px;top:703px;font-size:13.6px;color:#15171a;-webkit-text-stroke:0.2px #15171a;transform-origin:0 0;transform:scaleX(0.8);">%</div><div class="hl" style="top:746.4px"></div>
<div class="a" style="left:69.50px;top:770px;font-size:13.6px;font-weight:700;letter-spacing:-0.546px;color:#1565c0;">I Spent 2000 Hours Learning How To Learn: P…</div><div class="a" style="left:69.20px;top:792px;font-size:11.5px;letter-spacing:0.086px;color:#4d5156;-webkit-text-stroke:0.4px #4d5156;">https://novena.pro/novosti/propal-rezhim-modem%20…</div><div class="sb" style="top:772.1px"></div>
<div class="a" style="left:389.80px;top:780px;font-size:13.6px;letter-spacing:-0.269px;color:#fff;-webkit-text-stroke:0.2px #fff;">Show on page</div><svg style="left:480.6px;top:779.0px" width="14" height="14" viewBox="0 0 14 14" fill="none" stroke="#fff" stroke-width="1.5" stroke-linecap="round" stroke-linejoin="round"><path d="M5.6 2.4 H2.6 Q1 2.4 1 4 V11 Q1 12.6 2.6 12.6 H9.6 Q11.2 12.6 11.2 11 V8"/><path d="M8.4 0.9 H12.8 V5.3 M12.6 1.1 L6.4 7.3"/></svg>
<div class="a" style="left:528.00px;top:779px;font-size:13.6px;letter-spacing:0.334px;color:#15171a;-webkit-text-stroke:0.2px #15171a;">90/0/10</div><div class="a" style="left:641.50px;top:779px;font-size:13.6px;letter-spacing:-0.080px;color:#15171a;-webkit-text-stroke:0.2px #15171a;">1337.40</div><div class="a" style="left:756.50px;top:779px;font-size:13.6px;color:#15171a;-webkit-text-stroke:0.2px #15171a;">16</div><div class="a" style="left:871.30px;top:779px;font-size:13.6px;color:#15171a;-webkit-text-stroke:0.2px #15171a;">16</div><div class="a" style="left:986.30px;top:779px;font-size:13.6px;color:#15171a;-webkit-text-stroke:0.2px #15171a;">21</div><div class="a" style="left:1100.50px;top:779px;font-size:13.6px;color:#15171a;-webkit-text-stroke:0.2px #15171a;">14</div><div class="a" style="left:1214.90px;top:779px;font-size:13.6px;letter-spacing:-0.566px;color:#15171a;-webkit-text-stroke:0.2px #15171a;">17.1</div><div class="a" style="left:1244.20px;top:779px;font-size:13.6px;color:#15171a;-webkit-text-stroke:0.2px #15171a;transform-origin:0 0;transform:scaleX(0.8);">%</div><div class="hl" style="top:822.8px"></div>
<div class="a" style="left:69.50px;top:846px;font-size:13.6px;font-weight:700;letter-spacing:-0.546px;color:#1565c0;">I Spent 2000 Hours Learning How To Learn: P…</div><div class="a" style="left:69.20px;top:868px;font-size:11.5px;letter-spacing:0.086px;color:#4d5156;-webkit-text-stroke:0.4px #4d5156;">https://novena.pro/novosti/propal-rezhim-modem%20…</div><div class="sb" style="top:848.5px"></div>
<div class="a" style="left:389.80px;top:856px;font-size:13.6px;letter-spacing:-0.269px;color:#fff;-webkit-text-stroke:0.2px #fff;">Show on page</div><svg style="left:480.6px;top:855.4px" width="14" height="14" viewBox="0 0 14 14" fill="none" stroke="#fff" stroke-width="1.5" stroke-linecap="round" stroke-linejoin="round"><path d="M5.6 2.4 H2.6 Q1 2.4 1 4 V11 Q1 12.6 2.6 12.6 H9.6 Q11.2 12.6 11.2 11 V8"/><path d="M8.4 0.9 H12.8 V5.3 M12.6 1.1 L6.4 7.3"/></svg>
<div class="a" style="left:528.00px;top:856px;font-size:13.6px;letter-spacing:0.334px;color:#15171a;-webkit-text-stroke:0.2px #15171a;">90/0/10</div><div class="a" style="left:641.50px;top:856px;font-size:13.6px;letter-spacing:-0.080px;color:#15171a;-webkit-text-stroke:0.2px #15171a;">1337.40</div><div class="a" style="left:756.50px;top:856px;font-size:13.6px;color:#15171a;-webkit-text-stroke:0.2px #15171a;">16</div><div class="a" style="left:871.30px;top:856px;font-size:13.6px;color:#15171a;-webkit-text-stroke:0.2px #15171a;">16</div><div class="a" style="left:986.30px;top:856px;font-size:13.6px;color:#15171a;-webkit-text-stroke:0.2px #15171a;">21</div><div class="a" style="left:1100.50px;top:856px;font-size:13.6px;color:#15171a;-webkit-text-stroke:0.2px #15171a;">14</div><div class="a" style="left:1215.90px;top:856px;font-size:13.6px;letter-spacing:-0.468px;color:#15171a;-webkit-text-stroke:0.2px #15171a;">4.2</div><div class="a" style="left:1238.40px;top:856px;font-size:13.6px;color:#15171a;-webkit-text-stroke:0.2px #15171a;transform-origin:0 0;transform:scaleX(0.8);">%</div>

</div>
</body>
</html>
